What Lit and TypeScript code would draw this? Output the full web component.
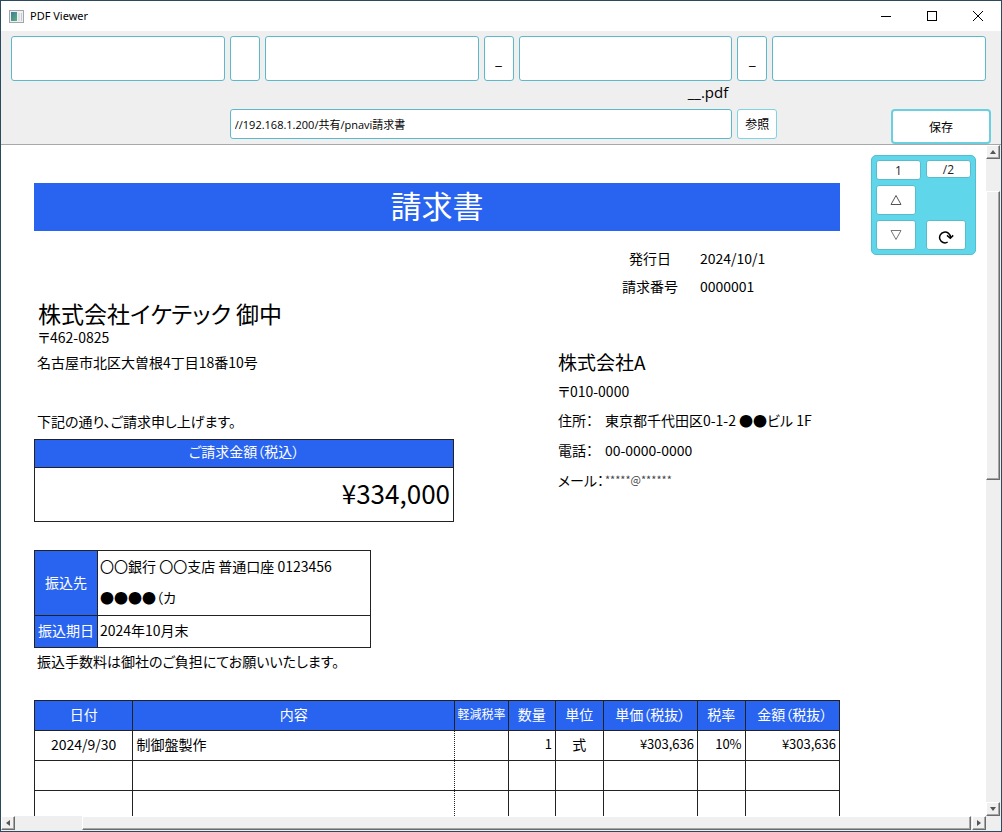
import { LitElement, html, css } from "lit";
import { customElement, property, state } from "lit/decorators.js";

interface Item {
  date: string;
  name: string;
  reduced: string;
  qty: string;
  unit: string;
  price: string;
  rate: string;
  amount: string;
}

const BLANK: Item = { date: "", name: "", reduced: "", qty: "", unit: "", price: "", rate: "", amount: "" };

@customElement("invoice-sheet")
export class InvoiceSheet extends LitElement {
  @property({ attribute: false }) items: Item[] = [];

  static styles = css`
    :host {
      display: block;
      box-sizing: border-box;
      padding: 38px 146px 0 33px;
      background: #fff;
      color: #000;
      font-family: "Noto Sans CJK JP", sans-serif;
      font-size: 14px;
      font-feature-settings: "palt";
      white-space: nowrap;
    }
    h1, h2, p, dl, dd, dt { margin: 0; font-weight: 400; }
    .title {
      height: 48px;
      line-height: 44px;
      background: #2964f0;
      color: #fff;
      font-size: 31px;
      text-align: center;
    }
    .columns { display: grid; grid-template-columns: 65fr 35fr; }
    .left { padding-top: 69px; }
    .customer { padding-left: 4px; font-size: 23px; line-height: 27px; }
    .postal { padding-left: 4px; line-height: 20px; }
    .line { padding-left: 3px; line-height: 30px; }
    .greeting { margin: 29px 0 3px; }
    .meta {
      display: grid;
      grid-template-columns: 56px 1fr;
      column-gap: 22px;
      margin-top: 13px;
      padding-left: 64px;
      line-height: 28px;
    }
    .meta dt { text-align: center; }
    .company { margin-top: 47px; font-size: 19px; line-height: 30px; }
    .office { line-height: 28px; }
    .contact { display: grid; grid-template-columns: 47px 1fr; line-height: 30px; }
    .masked { color: #444; font-size: 11px; line-height: 28px; }
    table { border-collapse: collapse; table-layout: fixed; }
    th, td { box-sizing: border-box; border: 1px solid #222; padding: 0 3px 3px; font-weight: 400; text-align: left; }
    th { background: #2964f0; color: #fff; text-align: center; }
    .total { width: 420px; }
    .total th { height: 28px; line-height: 20px; padding-bottom: 5px; }
    .total td { height: 54px; font-size: 26px; line-height: 40px; padding-bottom: 4px; text-align: right; }
    .bank { width: 337px; margin-top: 28px; }
    .bank th { width: 63px; padding: 0 0 3px; line-height: 28px; }
    .bank td { padding: 0 2px 2px; line-height: 31px; }
    .bank .due { padding-bottom: 3px; line-height: 28px; }
    .note { padding-left: 3px; line-height: 26px; }
    .items { width: 100%; margin-top: 26px; }
    .items th { height: 30px; padding: 0 0 3px; line-height: 20px; }
    .items td { height: 30px; line-height: 20px; }
    .items .small { font-size: 12px; }
    .items td.before-dotted { border-right: 1px dotted #222; }
    .items td.dotted { border-left: 1px dotted #222; }
    .items .center { text-align: center; }
    .items .num { text-align: right; font-size: 13px; }
    .w-date { width: 12.2%; }
    .w-name { width: 39.9%; }
    .w-reduced { width: 6.6%; }
    .w-narrow { width: 5.9%; }
    .w-money { width: 11.7%; }
  `;

  render() {
    return html`
      <h1 class="title">請求書</h1>
      <div class="columns">
        <div class="left">
          <h2 class="customer">株式会社イケテック 御中</h2>
          <p class="postal">〒462-0825</p>
          <p class="line">名古屋市北区大曽根4丁目18番10号</p>
          <p class="line greeting">下記の通り、ご請求申し上げます。</p>
          <table class="total">
            <tr><th>ご請求金額（税込）</th></tr>
            <tr><td>¥334,000</td></tr>
          </table>
        </div>
        <div>
          <dl class="meta">
            <dt>発行日</dt><dd>2024/10/1</dd>
            <dt>請求番号</dt><dd>0000001</dd>
          </dl>
          <h2 class="company">株式会社A</h2>
          <p class="office">〒010-0000</p>
          <dl class="contact">
            <dt>住所：</dt><dd>東京都千代田区0-1-2 ●●ビル 1F</dd>
            <dt>電話：</dt><dd>00-0000-0000</dd>
            <dt>メール：</dt><dd class="masked">*****@******</dd>
          </dl>
        </div>
      </div>
      <table class="bank">
        <tr><th>振込先</th><td>〇〇銀行 〇〇支店 普通口座 0123456<br />●●●●（カ</td></tr>
        <tr><th>振込期日</th><td class="due">2024年10月末</td></tr>
      </table>
      <p class="note">振込手数料は御社のご負担にてお願いいたします。</p>
      <table class="items">
        <tr>
          <th class="w-date">日付</th>
          <th class="w-name">内容</th>
          <th class="w-reduced small">軽減税率</th>
          <th class="w-narrow">数量</th>
          <th class="w-narrow">単位</th>
          <th class="w-money">単価（税抜）</th>
          <th class="w-narrow">税率</th>
          <th class="w-money">金額（税抜）</th>
        </tr>
        ${this.items.map(
          (i) => html`<tr>
            <td class="center">${i.date}</td>
            <td class="before-dotted">${i.name}</td>
            <td class="dotted">${i.reduced}</td>
            <td class="num">${i.qty}</td>
            <td class="center">${i.unit}</td>
            <td class="num">${i.price}</td>
            <td class="num">${i.rate}</td>
            <td class="num">${i.amount}</td>
          </tr>`
        )}
      </table>
    `;
  }
}

@customElement("page-navigator")
export class PageNavigator extends LitElement {
  @property({ type: Number }) page = 1;
  @property({ type: Number }) pages = 1;

  static styles = css`
    :host {
      display: grid;
      box-sizing: border-box;
      grid-template-columns: 45px 45px;
      grid-template-rows: 20px 30px 30px;
      gap: 5px;
      padding: 4px;
      border: 1px solid #50bfd2;
      border-radius: 5px;
      background: #60d6ea;
      font-family: "Open Sans", "Noto Sans CJK JP", sans-serif;
      font-size: 12px;
    }
    input, output, button {
      box-sizing: border-box;
      margin: 0;
      padding: 0;
      border: 1px solid #58bccb;
      border-radius: 3px;
      background: #fff;
      color: #222;
      font: inherit;
      text-align: center;
    }
    input { width: 45px; height: 20px; }
    output { height: 18px; line-height: 17px; }
    button { display: flex; align-items: center; justify-content: center; width: 40px; height: 30px; }
    .rotate { grid-column: 2; }
    .rotate svg { margin-top: 4px; }
  `;

  private step(by: number) {
    this.page = Math.min(this.pages, Math.max(1, this.page + by));
  }

  render() {
    return html`
      <input aria-label="ページ" .value=${String(this.page)} />
      <output>/${this.pages}</output>
      <button aria-label="前のページ" @click=${() => this.step(-1)}>
        <svg width="12" height="12" viewBox="0 0 12 12" fill="none" stroke="#555"><path d="M6 1.5 11 10.5H1Z" /></svg>
      </button>
      <span></span>
      <button aria-label="次のページ" @click=${() => this.step(1)}>
        <svg width="12" height="12" viewBox="0 0 12 12" fill="none" stroke="#777"><path d="M6 10.5 1 1.5H11Z" /></svg>
      </button>
      <button class="rotate" aria-label="回転">
        <svg width="16" height="14" viewBox="0 0 16 14" fill="none" stroke="#000" stroke-width="1.5">
          <path d="M9.6 12.2A5.4 5.4 0 1 1 12.4 7.2" />
          <path d="M9 5.4 12.3 8.2 15.2 5.4" />
        </svg>
      </button>
    `;
  }
}

@customElement("scroll-rail")
export class ScrollRail extends LitElement {
  @property({ reflect: true }) axis: "x" | "y" = "y";

  static styles = css`
    :host { display: flex; background: #efefef; }
    :host([axis="y"]) { flex-direction: column; width: 15px; }
    :host([axis="x"]) { height: 15px; }
    button, .thumb {
      box-sizing: border-box;
      border: 1px solid;
      border-color: #fff #6b6b6b #6b6b6b #fff;
      box-shadow: inset -1px -1px #a6a6a6;
      background: #f0f0f0;
    }
    button {
      display: flex;
      flex: none;
      align-items: center;
      justify-content: center;
      width: 14px;
      height: 14px;
      margin: 0;
      padding: 0;
    }
    .track { display: flex; flex: 1; }
    :host([axis="y"]) .track { flex-direction: column; }
    .before { flex: none; }
    :host([axis="y"]) .before { height: 5%; }
    :host([axis="y"]) .thumb { width: 14px; height: 45%; }
    :host([axis="x"]) .before { width: 7%; }
    :host([axis="x"]) .thumb { flex: 1; height: 14px; margin-right: 1px; }
  `;

  render() {
    const y = this.axis === "y";
    return html`
      <button aria-label=${y ? "上へ" : "左へ"}>
        <svg width="6" height="6" viewBox="0 0 6 6" fill="#555"><path d=${y ? "M0 5 3 1 6 5Z" : "M5 0 1 3 5 6Z"} /></svg>
      </button>
      <div class="track"><div class="before"></div><div class="thumb"></div></div>
      <button aria-label=${y ? "下へ" : "右へ"}>
        <svg width="6" height="6" viewBox="0 0 6 6" fill="#555"><path d=${y ? "M0 1 3 5 6 1Z" : "M1 0 5 3 1 6Z"} /></svg>
      </button>
    `;
  }
}

@customElement("app-root")
export class AppRoot extends LitElement {
  @state() private items: Item[] = [
    { date: "2024/9/30", name: "制御盤製作", reduced: "", qty: "1", unit: "式", price: "¥303,636", rate: "10%", amount: "¥303,636" },
    BLANK,
    BLANK,
    BLANK,
  ];

  static styles = css`
    :host {
      display: flex;
      flex-direction: column;
      box-sizing: border-box;
      height: 100vh;
      border: 1px solid #2b4a5e;
      background: #efefef;
      color: #000;
      font-family: "Open Sans", "Noto Sans CJK JP", sans-serif;
      font-size: 12px;
    }
    .titlebar { display: flex; flex: none; align-items: center; height: 30px; padding-left: 8px; background: #fff; }
    .caption { flex: 1; padding-left: 6px; font-family: "Noto Sans", sans-serif; font-size: 11px; line-height: 28px; }
    .window-button {
      display: flex;
      align-items: center;
      justify-content: center;
      width: 46px;
      height: 30px;
      padding: 0;
      border: 0;
      background: none;
    }
    .toolbar {
      display: grid;
      flex: none;
      grid-template-columns: 1fr 30px 1fr 30px 1fr 30px 1fr;
      grid-template-rows: 45px 28px 35px;
      column-gap: 5px;
      padding: 5px 15px 0 10px;
      border-bottom: 1px solid #a8a8a8;
    }
    .toolbar input, .toolbar button {
      box-sizing: border-box;
      width: 100%;
      min-width: 0;
      margin: 0;
      border: 1px solid #5cb9c9;
      border-radius: 3px;
      background: #fff;
      color: #000;
      font: inherit;
    }
    .toolbar .part { padding: 0 4px; font-size: 15px; }
    .toolbar .joint { padding: 0; text-align: center; }
    .filename { grid-column: 2 / 6; padding-right: 4px; font-size: 15px; line-height: 22px; text-align: right; }
    .toolbar .path { grid-row: 3; grid-column: 2 / 6; height: 30px; padding: 0 4px; font-size: 11px; }
    .toolbar .browse {
      grid-row: 3;
      grid-column: 6 / 8;
      width: 40px;
      height: 30px;
      padding: 0;
      border-color: #7fd3e0;
    }
    .toolbar .save {
      grid-row: 3;
      grid-column: 7;
      justify-self: end;
      width: 100px;
      margin-right: -5px;
      border: 2px solid #6acfdf;
      border-radius: 4px;
    }
    .viewer { display: grid; flex: 1; grid-template-columns: 1fr 15px; grid-template-rows: 1fr 15px; min-height: 0; }
    .pane { position: relative; overflow: hidden; min-height: 0; background: #fff; }
    .navigator { position: absolute; top: 10px; right: 10px; }
  `;

  private joint(index: number, value: string) {
    return html`<input class="part joint" aria-label="区切り ${index}" .value=${value} />`;
  }

  private part(index: number) {
    return html`<input class="part" aria-label="ファイル名 ${index}" />`;
  }

  render() {
    return html`
      <header class="titlebar">
        <svg width="15" height="13" viewBox="0 0 15 13">
          <defs>
            <linearGradient id="pane" x1="0" y1="0" x2="1" y2="1">
              <stop offset="0" stop-color="#3c7a9c" /><stop offset="1" stop-color="#5fae7c" />
            </linearGradient>
          </defs>
          <rect x=".5" y=".5" width="14" height="12" fill="#eef0f2" stroke="#a2a6aa" />
          <rect x="2" y="2" width="6" height="9" fill="url(#pane)" />
          <rect x="9" y="3" width="2" height="8" fill="#dde2e6" />
          <rect x="12" y="3" width="1" height="8" fill="#c5cace" />
        </svg>
        <span class="caption">PDF Viewer</span>
        <button class="window-button" aria-label="最小化">
          <svg width="10" height="10" stroke="#000"><path d="M0 5.5H10" /></svg>
        </button>
        <button class="window-button" aria-label="最大化">
          <svg width="10" height="10" fill="none" stroke="#000"><rect x=".5" y=".5" width="9" height="9" /></svg>
        </button>
        <button class="window-button" aria-label="閉じる">
          <svg width="10" height="10" stroke="#000"><path d="M0 0 10 10M10 0 0 10" /></svg>
        </button>
      </header>
      <div class="toolbar">
        ${this.part(1)} ${this.joint(1, "")} ${this.part(2)} ${this.joint(2, "_")} ${this.part(3)}
        ${this.joint(3, "_")} ${this.part(4)}
        <span class="filename">__.pdf</span>
        <input class="path" aria-label="保存先" .value=${"//192.168.1.200/共有/pnavi請求書"} />
        <button class="browse">参照</button>
        <button class="save">保存</button>
      </div>
      <main class="viewer">
        <div class="pane">
          <invoice-sheet .items=${this.items}></invoice-sheet>
          <page-navigator class="navigator" .page=${1} .pages=${2}></page-navigator>
        </div>
        <scroll-rail axis="y"></scroll-rail>
        <scroll-rail axis="x"></scroll-rail>
      </main>
    `;
  }
}
